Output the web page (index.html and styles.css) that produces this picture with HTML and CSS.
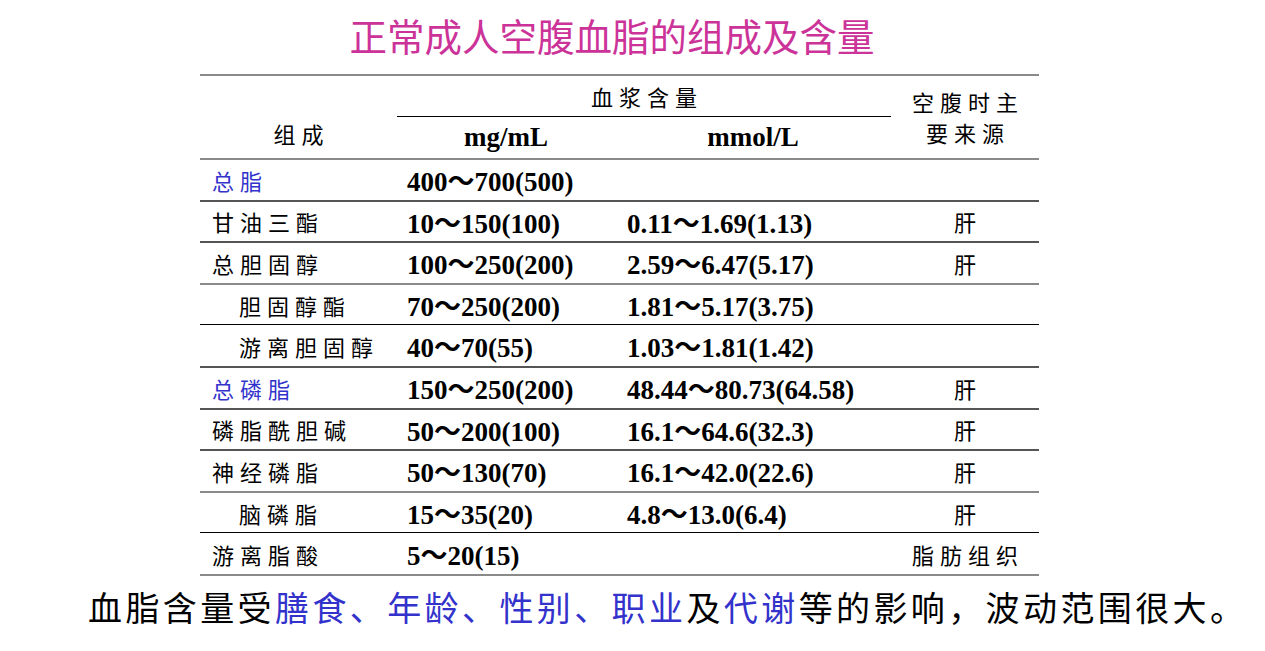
FILE: index.html
```html
<!DOCTYPE html>
<html lang="zh-CN">
<head>
<meta charset="utf-8">
<title>正常成人空腹血脂的组成及含量</title>
<link rel="stylesheet" href="styles.css">
</head>
<body>
<div class="slide">
  <h1 class="title">正常成人空腹血脂的组成及含量</h1>
  <div class="tbl">
    <div class="head">
      <div class="h-name">组成</div>
      <div class="h-plasma">血浆含量</div>
      <div class="h-unit1">mg/mL</div>
      <div class="h-unit2">mmol/L</div>
      <div class="h-src">空腹时主<br>要来源</div>
    </div>
    <div class="row lt"><div class="name blue">总脂</div><div class="num n1">400～700(500)</div><div class="num n2"></div><div class="src"></div></div>
    <div class="row"><div class="name">甘油三酯</div><div class="num n1">10～150(100)</div><div class="num n2">0.11～1.69(1.13)</div><div class="src">肝</div></div>
    <div class="row"><div class="name">总胆固醇</div><div class="num n1">100～250(200)</div><div class="num n2">2.59～6.47(5.17)</div><div class="src">肝</div></div>
    <div class="row lt"><div class="name sub">胆固醇酯</div><div class="num n1">70～250(200)</div><div class="num n2">1.81～5.17(3.75)</div><div class="src"></div></div>
    <div class="row bk"><div class="name sub">游离胆固醇</div><div class="num n1">40～70(55)</div><div class="num n2">1.03～1.81(1.42)</div><div class="src"></div></div>
    <div class="row"><div class="name blue">总磷脂</div><div class="num n1">150～250(200)</div><div class="num n2">48.44～80.73(64.58)</div><div class="src">肝</div></div>
    <div class="row"><div class="name">磷脂酰胆碱</div><div class="num n1">50～200(100)</div><div class="num n2">16.1～64.6(32.3)</div><div class="src">肝</div></div>
    <div class="row"><div class="name">神经磷脂</div><div class="num n1">50～130(70)</div><div class="num n2">16.1～42.0(22.6)</div><div class="src">肝</div></div>
    <div class="row lt"><div class="name sub">脑磷脂</div><div class="num n1">15～35(20)</div><div class="num n2">4.8～13.0(6.4)</div><div class="src">肝</div></div>
    <div class="row bk"><div class="name">游离脂酸</div><div class="num n1">5～20(15)</div><div class="num n2"></div><div class="src">脂肪组织</div></div>
  </div>
  <p class="note">血脂含量受<span class="blue">膳食、年龄、性别、职业</span>及<span class="blue">代谢</span>等的影响，波动范围很大。</p>
</div>
</body>
</html>
```

FILE: styles.css
```css
html, body {
  margin: 0;
  padding: 0;
  background: #ffffff;
}

.slide {
  width: 1265px;
  height: 651px;
  overflow: hidden;
  font-family: "Noto Sans CJK SC", sans-serif;
  color: #000;
}

.title {
  margin: 0;
  height: 74px;
  padding-right: 41px;
  font-family: "Noto Sans CJK SC", sans-serif;
  font-size: 37.5px;
  font-weight: normal;
  line-height: 70px;
  color: #cc3399;
  text-align: center;
}

.tbl {
  margin-left: 200px;
  width: 839px;
  border-top: 2px solid #8a8a8a;
  border-bottom: 2px solid #8a8a8a;
}

.head {
  display: grid;
  grid-template-columns: 197px 218px 276px 148px;
  grid-template-rows: 41px 41px;
  font-size: 22px;
  letter-spacing: 6px;
}

.h-name {
  grid-column: 1;
  grid-row: 1 / 3;
  align-self: end;
  padding-bottom: 10px;
  padding-left: 6px;
  line-height: 30px;
  text-align: center;
}

.h-plasma {
  grid-column: 2 / 4;
  grid-row: 1;
  display: flex;
  align-items: center;
  justify-content: center;
  padding-left: 6px;
  border-bottom: 1.5px solid #000;
}

.h-unit1,
.h-unit2 {
  grid-row: 2;
  display: flex;
  align-items: center;
  justify-content: center;
  font-family: "Liberation Serif", "Noto Sans CJK SC", serif;
  font-weight: bold;
  font-size: 27px;
  letter-spacing: 0;
}

.h-unit1 { grid-column: 2; }
.h-unit2 { grid-column: 3; }

.h-src {
  grid-column: 4;
  grid-row: 1 / 3;
  display: flex;
  align-items: center;
  justify-content: center;
  padding-left: 6px;
  line-height: 31px;
  text-align: center;
}

.row {
  display: grid;
  grid-template-columns: 197px 218px 276px 148px;
  align-items: center;
  height: 41.6px;
  box-sizing: border-box;
  border-top: 2px solid #555;
}

.row.lt { border-top-color: #8a8a8a; }
.row.bk { border-top: 1.5px solid #000; }

.name {
  padding-left: 12px;
  font-size: 22px;
  letter-spacing: 6px;
  white-space: nowrap;
}

.name.sub { padding-left: 39px; }

.num {
  font-family: "Liberation Serif", "Noto Sans CJK SC", serif;
  font-weight: bold;
  font-size: 27px;
  white-space: nowrap;
}

.n1 { padding-left: 10px; }
.n2 { padding-left: 12px; }

.src {
  padding-left: 6px;
  font-size: 22px;
  letter-spacing: 6px;
  text-align: center;
  white-space: nowrap;
}

.blue { color: #3333cc; }

.note {
  margin: 0;
  padding-left: 88px;
  font-size: 34px;
  line-height: 62px;
  letter-spacing: 3.4px;
  white-space: nowrap;
}
```
